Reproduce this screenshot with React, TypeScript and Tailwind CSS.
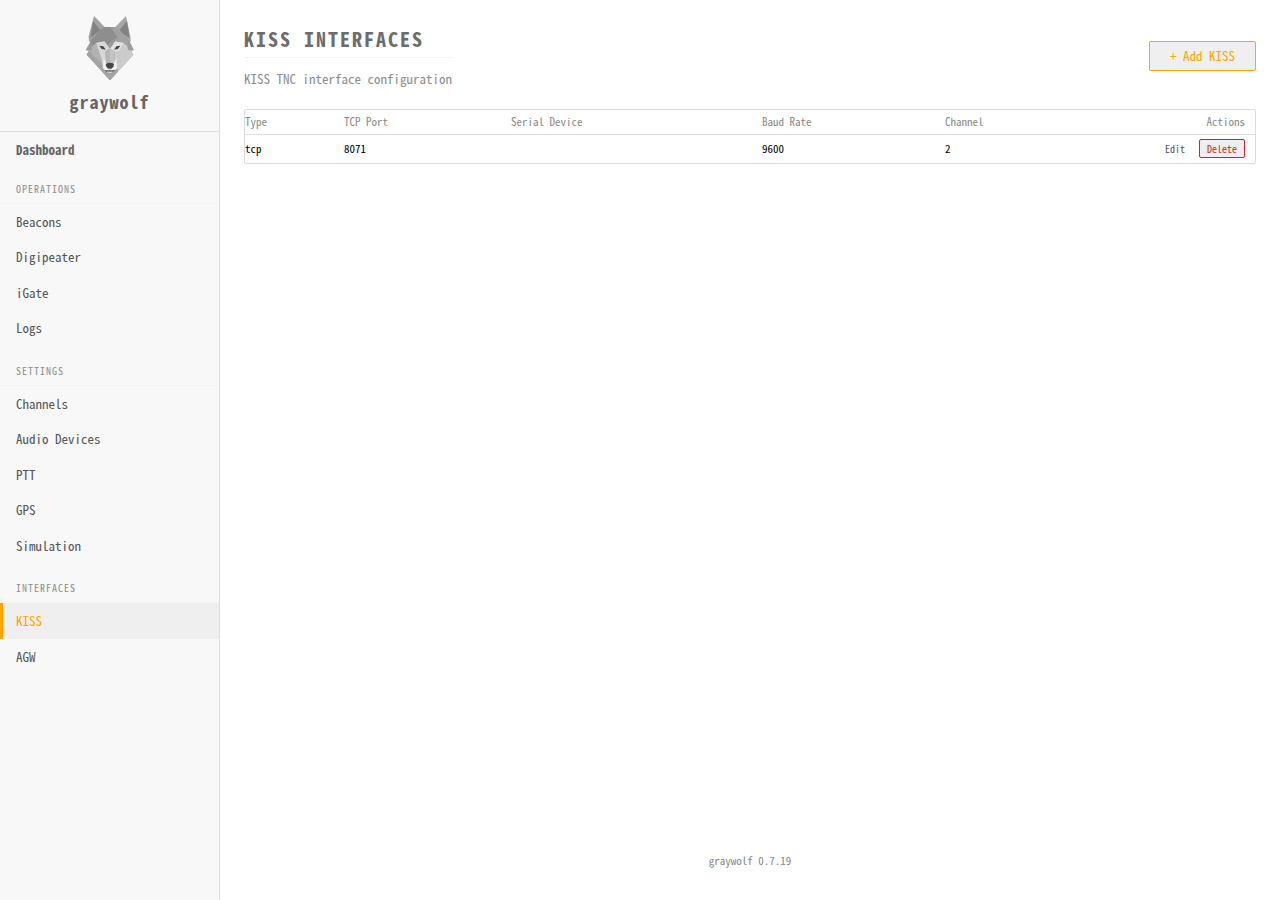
import clsx from 'clsx';

type NavItem = {
  label: string;
  active?: boolean;
};

type NavSection = {
  title: string;
  items: NavItem[];
};

type KissInterface = {
  id: number;
  type: string;
  tcpPort: string;
  serialDevice: string;
  baudRate: number;
  channel: number;
};

const SECTIONS: NavSection[] = [
  {
    title: 'Operations',
    items: [{ label: 'Beacons' }, { label: 'Digipeater' }, { label: 'iGate' }, { label: 'Logs' }],
  },
  {
    title: 'Settings',
    items: [
      { label: 'Channels' },
      { label: 'Audio Devices' },
      { label: 'PTT' },
      { label: 'GPS' },
      { label: 'Simulation' },
    ],
  },
  {
    title: 'Interfaces',
    items: [{ label: 'KISS', active: true }, { label: 'AGW' }],
  },
];

const INTERFACES: KissInterface[] = [
  { id: 1, type: 'tcp', tcpPort: '8071', serialDevice: '', baudRate: 9600, channel: 2 },
];

function WolfLogo() {
  return (
    <svg viewBox="24 33 192 192" className="size-16" aria-hidden="true">
      {/* head */}
      <path
        d="M88 68 H152 L168 88 L179 98 L180 112 L192 136 L183 137 L190 149 L120 226 L50 149 L57 137 L47 136 L60 112 L61 98 L72 88 Z"
        fill="#9b9b9b"
      />
      {/* ears */}
      <path d="M72 33 L104 66 L100 84 L74 104 L57 110 L56 94 Z" fill="#a2a2a2" />
      <path d="M168 33 L136 66 L140 84 L166 104 L182 110 L181 94 Z" fill="#a6a6a6" />
      <path d="M69 48 L91 76 L80 84 L62 98 Z" fill="#828282" />
      <path d="M171 48 L148 76 L158 86 L178 98 Z" fill="#828282" />
      {/* forehead */}
      <path d="M102 66 H122 L142 96 L120 128 L103 109 L82 112 L66 124 L62 106 L76 92 L90 76 Z" fill="#8e8e8e" />
      <path d="M122 66 H136 L150 76 L163 92 L176 108 L172 122 L156 112 L136 109 L142 96 Z" fill="#a1a1a1" />
      <path d="M142 96 L136 109 L120 130 L112 119 Z" fill="#9b9b9b" />
      {/* cheeks */}
      <path d="M66 124 L82 112 L94 116 L106 138 L108 176 L99 196 L98 202 L50 149 L57 137 L66 134 Z" fill="#b2b2b2" />
      <path d="M172 122 L156 112 L146 116 L134 138 L132 176 L141 196 L142 202 L190 149 L183 137 L174 134 Z" fill="#cbcbcb" />
      <path d="M50 149 L57 137 L78 160 L98 178 L99 202 Z" fill="#a4a4a4" />
      <path d="M78 114 L103 109 L120 131 L106 140 L92 136 Z" fill="#d9d9d9" />
      <path d="M161 114 L136 109 L120 131 L134 140 L148 136 Z" fill="#e2e2e2" />
      <path d="M80 118 L93 134 L106 138 L108 172 L99 191 L95 162 Z" fill="#d8d8d8" />
      {/* muzzle */}
      <path d="M120 131 L106 138 L109 178 H131 L134 138 Z" fill="#b6b6b6" />
      <path d="M120 131 L134 138 L131 178 H120 Z" fill="#c4c4c4" />
      <path d="M101 160 L108 174 L120 186 L132 174 L139 160 L141 190 L131 200 H109 L99 190 Z" fill="#f0f0f0" />
      <path d="M97 191 L108 198 H132 L143 191 L143 201 L120 226 L97 201 Z" fill="#a4a4a4" />
      <path d="M104 195 L118 196 L120 193 L122 196 L136 195 L131 200 H109 Z" fill="#686868" />
      <path d="M110 200 H130 L120 205 Z" fill="#dedede" />
      <path d="M107 179 Q109 173 120 173 Q131 173 132 179 Q131 187 124 191 H115 Q108 187 107 179 Z" fill="#454545" />
      {/* eyes */}
      <path d="M88 122 L100 124 L107 134 L95 132 Z" fill="#484848" />
      <path d="M151 122 L139 124 L132 134 L144 132 Z" fill="#484848" />
    </svg>
  );
}

function NavLink({ item }: { item: NavItem }) {
  return (
    <a
      href="#"
      aria-current={item.active ? 'page' : undefined}
      className={clsx(
        'block border-l-3 py-2 pr-4 pl-[13px] text-[13px] leading-normal',
        item.active ? 'border-[#ffa500] bg-[#efefef] text-[#ffa500]' : 'border-transparent text-[#555]',
      )}
    >
      {item.label}
    </a>
  );
}

function Sidebar() {
  return (
    <aside className="w-[220px] shrink-0 border-r border-[#dcdcdc] bg-[#f8f8f8]">
      <div className="flex flex-col items-center gap-2 border-b border-[#dcdcdc] pt-4 pb-4">
        <WolfLogo />
        <span className="text-lg leading-[27px] font-bold tracking-[1px] text-[#666]">graywolf</span>
      </div>

      <nav>
        <a href="#" className="block px-4 py-2 text-[13px] leading-normal font-bold text-[#666]">
          Dashboard
        </a>
        {SECTIONS.map((section) => (
          <div key={section.title} className="mb-1">
            <h2 className="border-b border-dotted border-[#f0f0f0] px-4 pt-[13px] pb-[7px] text-[10px] leading-[15px] tracking-[1px] text-[#8c8c8c] uppercase">
              {section.title}
            </h2>
            {section.items.map((item) => (
              <NavLink key={item.label} item={item} />
            ))}
          </div>
        ))}
      </nav>
    </aside>
  );
}

function InterfaceTable() {
  return (
    <div className="mt-5 overflow-hidden rounded-xs border border-[#dcdcdc]">
      <table className="w-full table-fixed text-left text-[11px] leading-4">
        <colgroup>
          <col className="w-[99px]" />
          <col className="w-[167px]" />
          <col className="w-[251px]" />
          <col className="w-[183px]" />
          <col className="w-[310px]" />
        </colgroup>
        <thead>
          <tr className="border-b border-[#e0e0e0] text-[#888]">
            <th className="pt-[3px] pb-[5px] font-normal">Type</th>
            <th className="pt-[3px] pb-[5px] font-normal">TCP Port</th>
            <th className="pt-[3px] pb-[5px] font-normal">Serial Device</th>
            <th className="pt-[3px] pb-[5px] font-normal">Baud Rate</th>
            <th className="pt-[3px] pb-[5px] font-normal">
              <div className="flex justify-between pr-[10px]">
                <span>Channel</span>
                <span>Actions</span>
              </div>
            </th>
          </tr>
        </thead>
        <tbody>
          {INTERFACES.map((row) => (
            <tr key={row.id} className="text-black">
              <td className="pt-1 pb-[5px]">{row.type}</td>
              <td className="pt-1 pb-[5px]">{row.tcpPort}</td>
              <td className="pt-1 pb-[5px]">{row.serialDevice}</td>
              <td className="pt-1 pb-[5px]">{row.baudRate}</td>
              <td className="pt-1 pb-[5px]">
                <div className="flex items-center justify-between pr-[10px]">
                  <span>{row.channel}</span>
                  <div className="flex gap-[6px] text-[10px] leading-[17px]">
                    <button
                      type="button"
                      className="rounded-xs border border-transparent px-[7px] text-[#555]"
                    >
                      Edit
                    </button>
                    <button
                      type="button"
                      className="rounded-xs border border-[#cc2222] bg-[#efefef] px-[7px] text-[#cc2222]"
                    >
                      Delete
                    </button>
                  </div>
                </div>
              </td>
            </tr>
          ))}
        </tbody>
      </table>
    </div>
  );
}

export default function App() {
  return (
    <div className="flex min-h-screen bg-white font-['Noto_Sans_Mono_CJK_SC','Liberation_Mono',monospace]">
      <Sidebar />
      <main className="flex min-w-0 flex-1 flex-col px-6 pt-6 pb-8">
        <header className="flex items-center justify-between">
          <div>
            <h1 className="border-b border-dotted border-[#ececec] pb-[3px] text-xl leading-[30px] font-bold tracking-[2px] text-[#6c6c6c] uppercase">
              KISS Interfaces
            </h1>
            <p className="mt-[11px] text-[13px] leading-normal text-[#8c8c8c]">KISS TNC interface configuration</p>
          </div>
          <button
            type="button"
            className="rounded-xs border border-[#ffa500] bg-[#efefef] px-5 py-1 text-[13px] leading-5 text-[#ffa500]"
          >
            + Add KISS
          </button>
        </header>

        <InterfaceTable />

        <footer className="mt-auto text-center text-[11px] leading-4 text-[#888]">graywolf 0.7.19</footer>
      </main>
    </div>
  );
}
